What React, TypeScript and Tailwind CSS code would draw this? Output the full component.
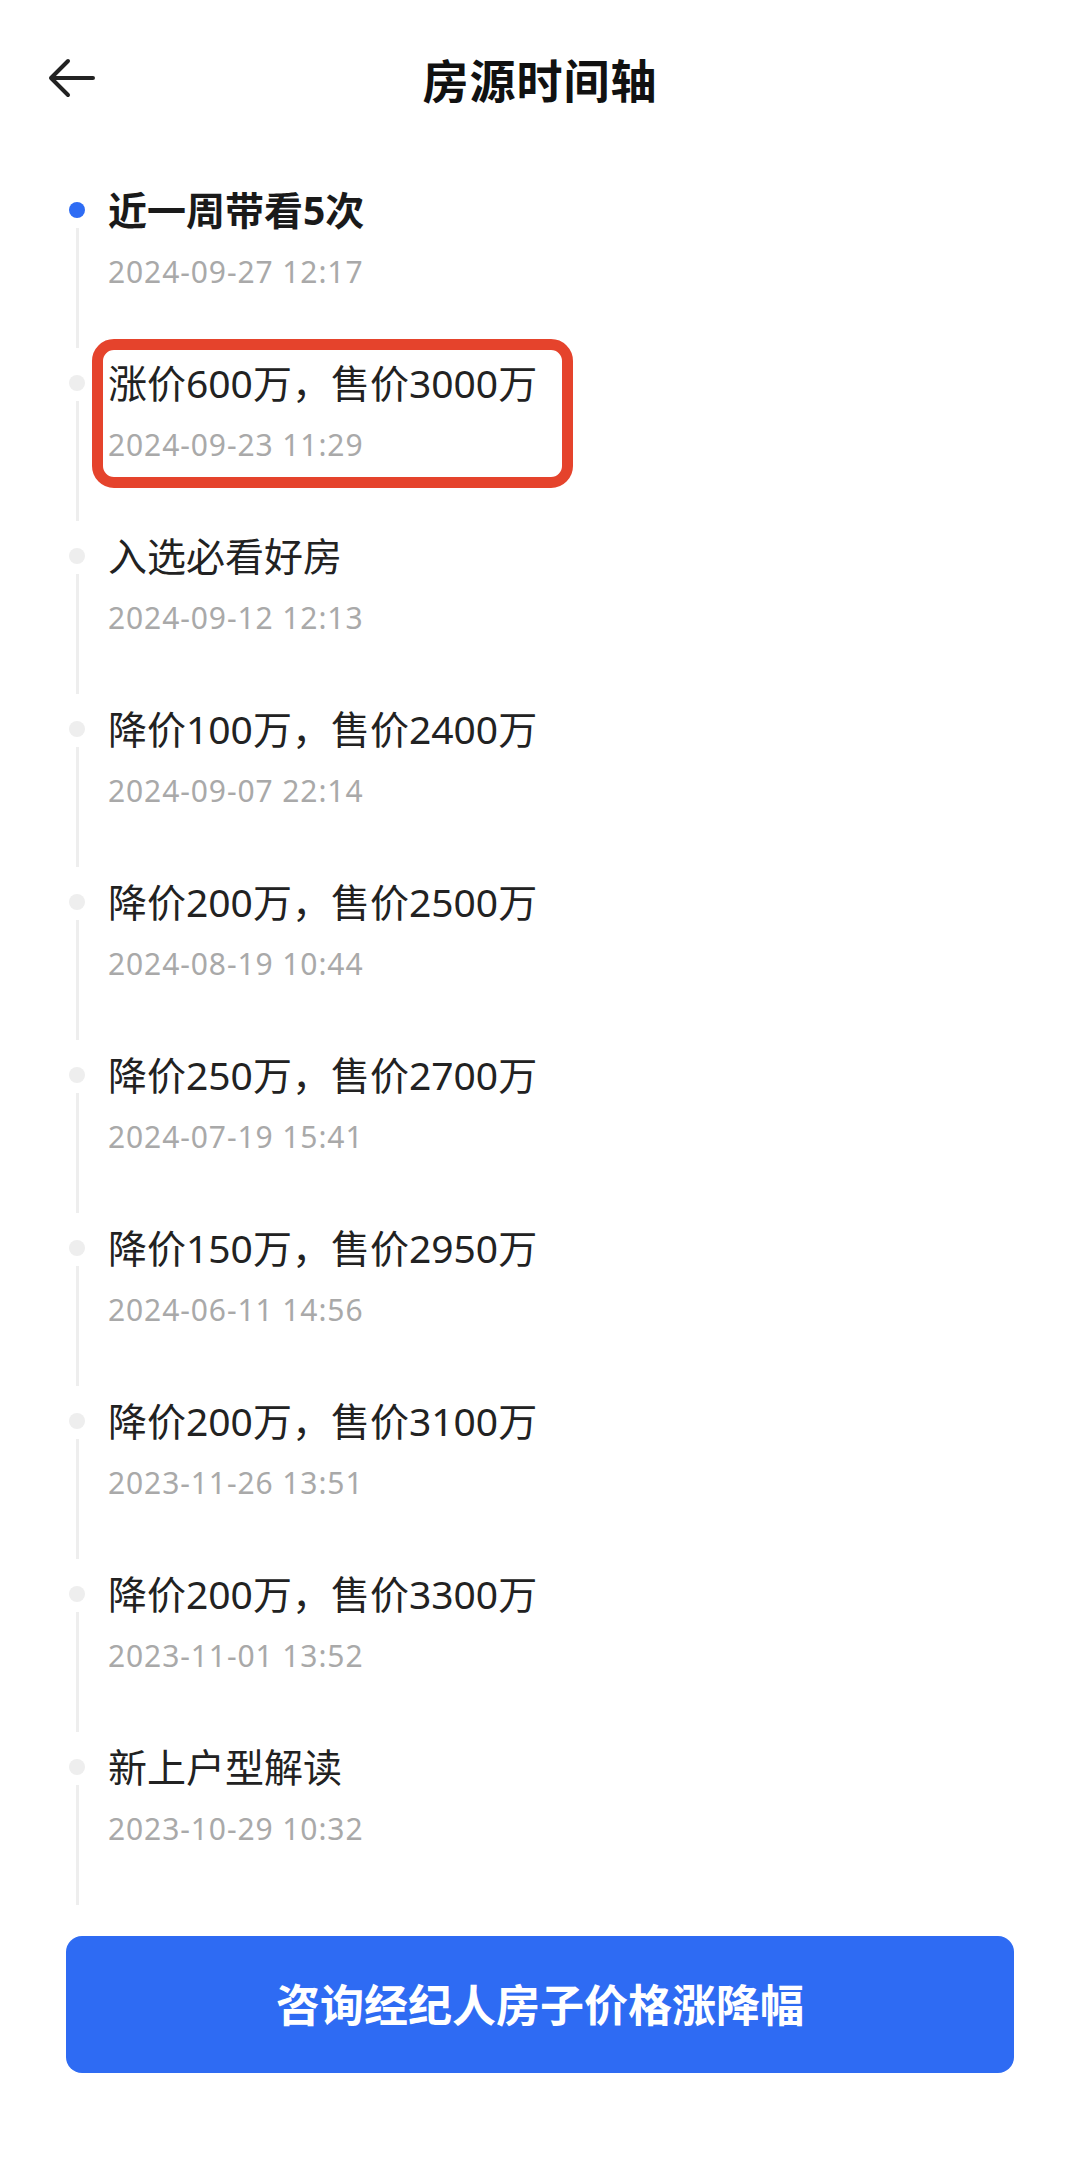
import React from "react";

const items = [
  { title: "近一周带看5次", date: "2024-09-27 12:17", active: true },
  { title: "涨价600万，售价3000万", date: "2024-09-23 11:29", boxed: true },
  { title: "入选必看好房", date: "2024-09-12 12:13" },
  { title: "降价100万，售价2400万", date: "2024-09-07 22:14" },
  { title: "降价200万，售价2500万", date: "2024-08-19 10:44" },
  { title: "降价250万，售价2700万", date: "2024-07-19 15:41" },
  { title: "降价150万，售价2950万", date: "2024-06-11 14:56" },
  { title: "降价200万，售价3100万", date: "2023-11-26 13:51" },
  { title: "降价200万，售价3300万", date: "2023-11-01 13:52" },
  { title: "新上户型解读", date: "2023-10-29 10:32" },
];

export default function App() {
  return (
    <div
      className="w-[1080px] h-[2164px] bg-white relative overflow-hidden"
      style={{ fontFamily: '"Noto Sans", "Noto Sans CJK SC", sans-serif' }}
    >
      {/* Header */}
      <div className="relative h-[160px] flex items-center justify-center">
        <button className="absolute left-[44px] top-[56px] w-[54px] h-[44px] flex items-center justify-center">
          <svg width="50" height="40" viewBox="0 0 50 40" fill="none">
            <path
              d="M47 20 H5 M22 3 L5 20 L22 37"
              stroke="#222222"
              strokeWidth="4"
              strokeLinecap="round"
              strokeLinejoin="round"
            />
          </svg>
        </button>
        <h1 className="text-[46px] font-bold text-[#111111] leading-none tracking-[1px]">房源时间轴</h1>
      </div>

      {/* Timeline */}
      <div className="pl-[61px] pt-[26px]">
        {items.map((it, i) => (
          <div key={i} className="relative flex h-[173px]">
            <div className="w-[32px] flex flex-col items-center">
              <div
                className={
                  it.active
                    ? "mt-[16px] w-[16px] h-[16px] rounded-full bg-[#2e6cf4]"
                    : "mt-[16px] w-[16px] h-[16px] rounded-full bg-[#eeeeee]"
                }
              />
              <div className="mt-[10px] w-[3px] h-[120px] bg-[#eeeeee]" />
            </div>
            <div className="ml-[15px] flex flex-col">
              <div
                className={
                  it.active
                    ? "text-[39px] leading-[48px] font-bold text-[#1a1a1a]"
                    : "text-[39px] leading-[48px] text-[#222222]"
                }
              >
                {it.title}
              </div>
              <div className="mt-[18px] text-[30px] leading-[40px] tracking-[0.9px] text-[#a9a9a9]">{it.date}</div>
            </div>
            {it.boxed && (
              <div className="absolute left-[31px] top-[-20px] w-[481px] h-[149px] border-[11px] border-[#e5432c] rounded-[22px] pointer-events-none" />
            )}
          </div>
        ))}
      </div>

      {/* Button */}
      <div className="px-[66px] mt-[20px]">
        <button className="w-full h-[137px] rounded-[16px] bg-[#2e6bf3] text-white text-[44px] font-bold flex items-center justify-center">
          咨询经纪人房子价格涨降幅
        </button>
      </div>
    </div>
  );
}
